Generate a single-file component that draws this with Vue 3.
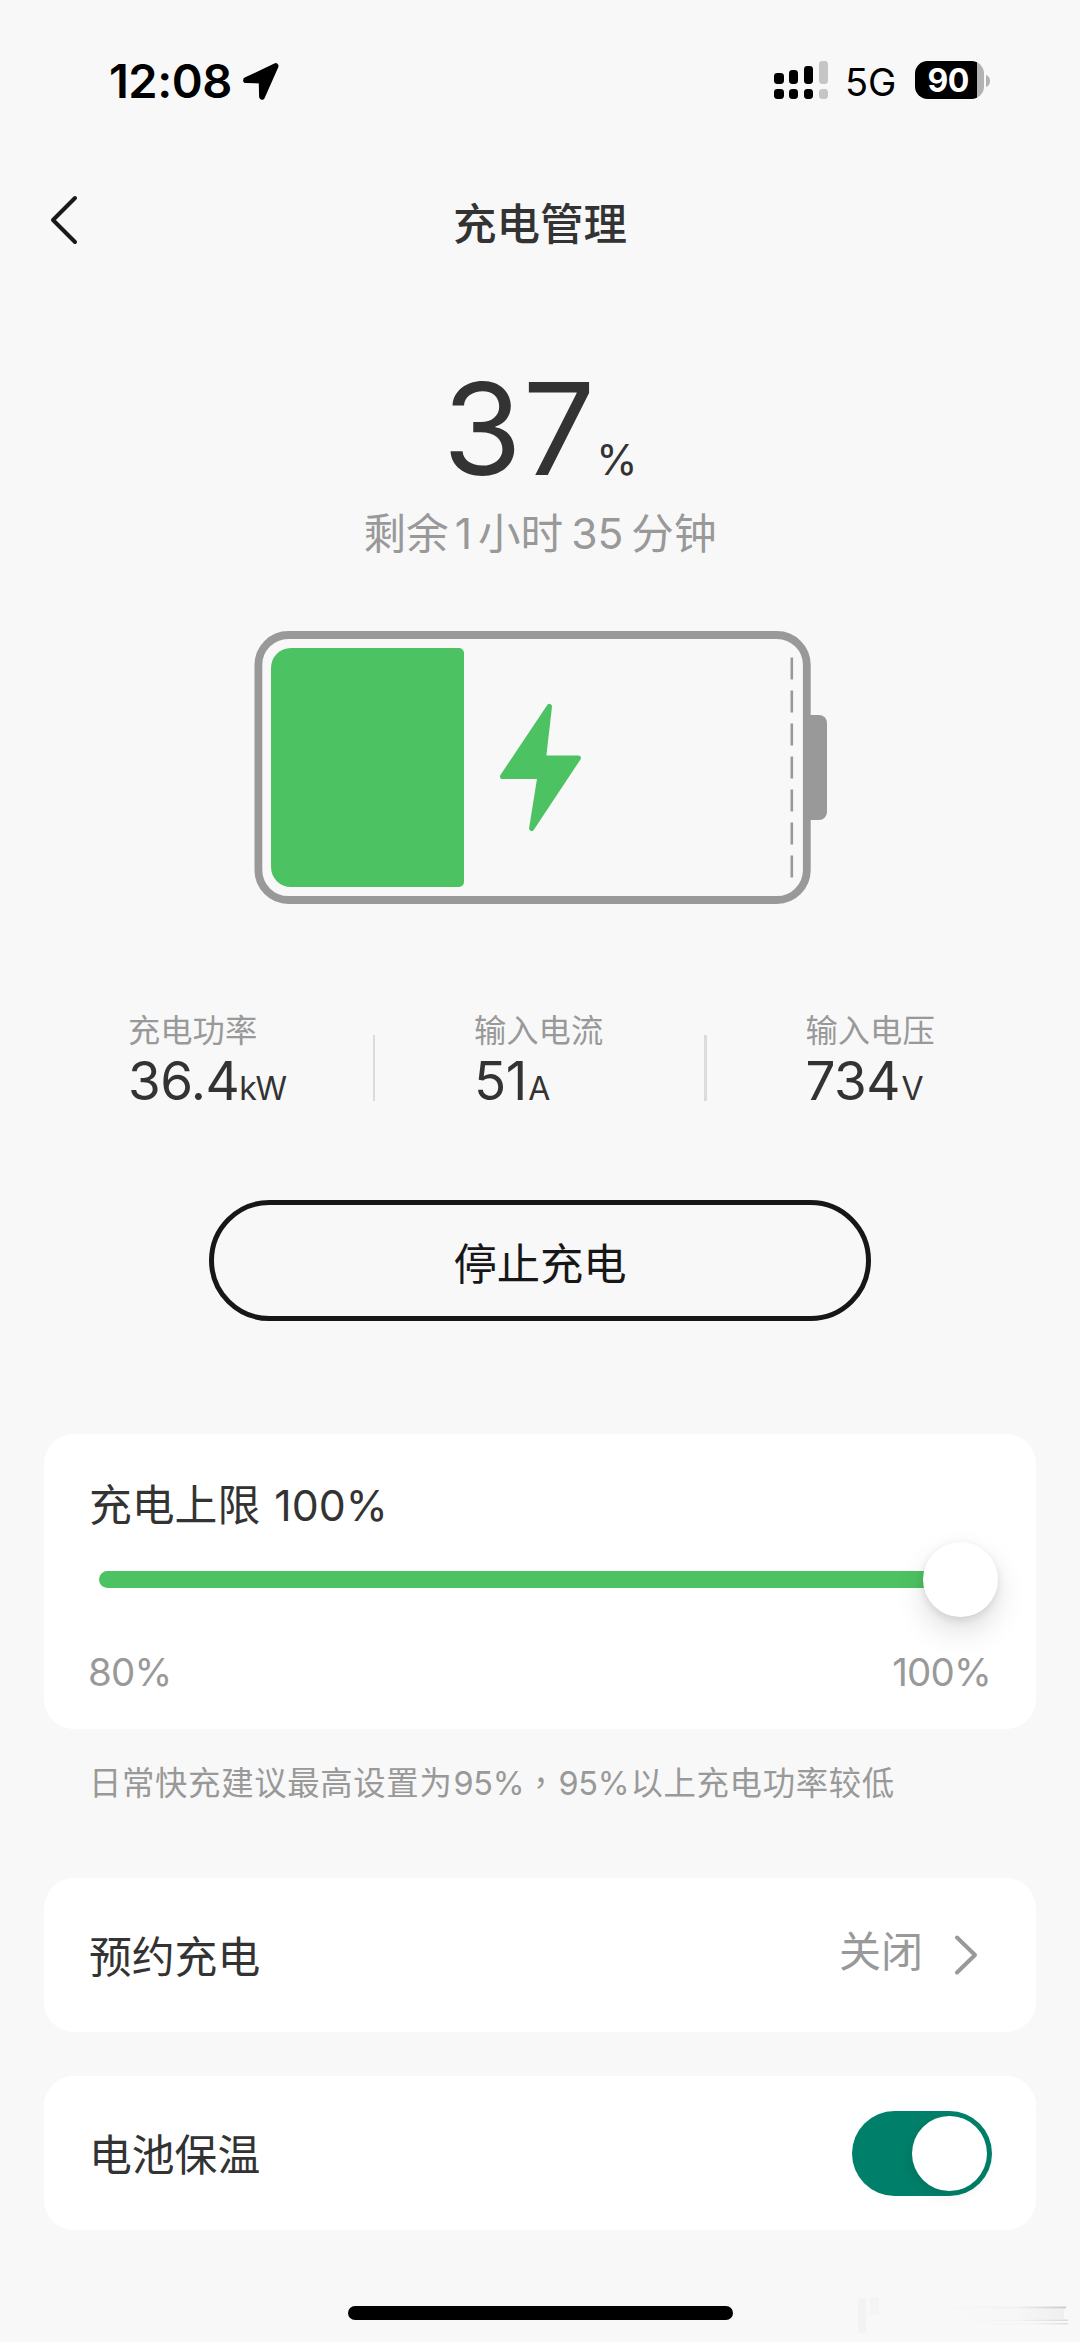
<script setup>
import { ref } from 'vue'

const level = ref(37)
const limit = ref(100)
const keepWarm = ref(true)

const stats = [
  { label: '充电功率', value: '36.4', unit: 'kW' },
  { label: '输入电流', value: '51', unit: 'A' },
  { label: '输入电压', value: '734', unit: 'V' },
]

const signal = [11, 14, 18, 23]
</script>

<template>
  <div class="screen">
    <header class="status">
      <div class="status-left">
        <span class="time">12:08</span>
        <svg class="locate" width="36" height="37" viewBox="0 0 36 37">
          <path d="M3 17.2 32.6 3 19 33.8 18.6 17.5Z" fill="#000" stroke="#000" stroke-width="5.8" stroke-linejoin="round" />
        </svg>
      </div>
      <div class="status-right">
        <div class="signal">
          <div v-for="(h, i) in signal" :key="i" class="signal-col" :class="{ off: i === 3 }">
            <i class="bar" :style="{ height: h + 'px' }"></i>
            <i class="dot"></i>
          </div>
        </div>
        <span class="network">5G</span>
        <div class="phone-battery"><span>90</span></div>
        <svg class="phone-nub" width="4" height="12" viewBox="0 0 4 12"><path d="M0 0C2.6 1 4 3.2 4 6S2.6 11 0 12Z" fill="#b2b2b2" /></svg>
      </div>
    </header>

    <nav class="nav">
      <svg class="back" width="30" height="52" viewBox="0 0 30 52">
        <path d="M26 4 4 26 26 48" fill="none" stroke="#191919" stroke-width="4" stroke-linecap="round" stroke-linejoin="round" />
      </svg>
      <h1>充电管理</h1>
    </nav>

    <section class="summary">
      <div class="percent"><span class="num">{{ level }}</span><span class="sign">%</span></div>
      <div class="remain"><span>剩余</span><b class="one">1</b><span>小时</span><b class="min">35</b><span>分钟</span></div>
    </section>

    <svg class="battery" width="574" height="274" viewBox="254 630 574 274">
      <rect x="258.4" y="635" width="548.4" height="265" rx="30" fill="none" stroke="#999" stroke-width="7.8" />
      <path d="M810 715h9a8 8 0 0 1 8 8v89a8 8 0 0 1-8 8h-9z" fill="#999" />
      <path d="M291 648H459a5 5 0 0 1 5 5V882a5 5 0 0 1-5 5H291a20 20 0 0 1-20-20V668a20 20 0 0 1 20-20z" fill="#4dc262" />
      <path d="M549.4 706.4 543.5 758H578.3L531.7 828.4 540 776.4H502.6Z" fill="#4dc262" stroke="#4dc262" stroke-width="5.2" stroke-linejoin="round" />
      <path d="M791.8 657.4V878" stroke="#999" stroke-width="2.6" stroke-dasharray="22 11" fill="none" />
    </svg>

    <section class="stats">
      <div v-for="s in stats" :key="s.label" class="stat">
        <span class="label">{{ s.label }}</span>
        <div class="value"><span>{{ s.value }}</span><small :class="{ wide: s.unit.length > 1 }">{{ s.unit }}</small></div>
      </div>
    </section>

    <button class="stop"><span>停止充电</span></button>

    <section class="card limit">
      <h2>充电上限 <span>{{ limit }}%</span></h2>
      <div class="slider">
        <div class="track"></div>
        <div class="thumb"></div>
      </div>
      <div class="range"><span>80%</span><span>100%</span></div>
    </section>
    <p class="hint">日常快充建议最高设置为<b>95%</b><i>，</i><b>95%</b>以上充电功率较低</p>

    <section class="card row schedule">
      <h2>预约充电</h2>
      <span class="state">关闭</span>
      <svg width="26" height="44" viewBox="0 0 26 44">
        <path d="M4 4.5 22 22 4 39.5" fill="none" stroke="#999" stroke-width="4" stroke-linecap="round" stroke-linejoin="round" />
      </svg>
    </section>

    <section class="card row warm">
      <h2>电池保温</h2>
      <div class="toggle" :class="{ on: keepWarm }"><i></i></div>
    </section>

    <div class="home"></div>
    <svg class="smudge" width="240" height="62" viewBox="0 0 240 62">
      <defs>
        <linearGradient id="fade" x1="0" x2="1" y1="0" y2="0">
          <stop offset="0" stop-color="#000" stop-opacity="0" />
          <stop offset=".6" stop-color="#000" stop-opacity=".03" />
          <stop offset="1" stop-color="#000" stop-opacity=".18" />
        </linearGradient>
      </defs>
      <rect x="18" y="18" width="8" height="35" fill="#000" opacity=".018" />
      <rect x="30" y="17" width="9" height="18" fill="#000" opacity=".014" />
      <rect x="100" y="26.5" width="126" height="2" fill="url(#fade)" />
      <rect x="100" y="29" width="124" height="10" fill="url(#fade)" opacity=".2" />
      <rect x="100" y="39.5" width="128" height="1.5" fill="url(#fade)" opacity=".7" />
      <rect x="140" y="43" width="88" height="1.5" fill="url(#fade)" opacity=".6" />
    </svg>
  </div>
</template>

<style>
body { background: #f8f8f8; }
</style>

<style scoped>
* { box-sizing: border-box; }
.screen {
  position: relative;
  width: 1080px;
  height: 2342px;
  overflow: hidden;
  display: flex;
  flex-direction: column;
  background: #f8f8f8;
  color: #333;
  font-family: Inter, "Noto Sans CJK SC", sans-serif;
  text-autospace: no-autospace;
}
h1, h2, p { margin: 0; font-weight: 400; }
b, i { font-weight: inherit; font-style: normal; }

.status {
  height: 162px;
  flex: none;
  display: flex;
  justify-content: space-between;
  padding: 0 90px 0 109px;
  color: #000;
}
.status-left, .status-right { display: flex; height: 162px; align-items: center; }
.time { font-size: 47px; font-weight: 600; line-height: 60px; letter-spacing: -0.5px; }
.locate { margin-left: 11px; overflow: visible; }
.status-right { align-items: flex-start; padding-top: 61px; }
.signal { display: flex; gap: 5.6px; height: 38px; align-items: flex-end; }
.signal-col { display: flex; flex-direction: column; gap: 5px; width: 9.2px; }
.signal-col i { display: block; border-radius: 3.4px; background: #000; }
.signal-col .dot { height: 10px; }
.signal-col.off i { background: #c5c5c5; }
.network { margin-left: 17px; font-size: 38px; line-height: 42px; width: 51px; }
.phone-battery {
  margin-left: 19px;
  width: 69px;
  height: 38px;
  border-radius: 12.5px;
  background: linear-gradient(90deg, #000 62px, #b2b2b2 62px);
  color: #fff;
  font-size: 32px;
  font-weight: 700;
  line-height: 39px;
  padding-left: 12.5px;
  letter-spacing: -0.5px;
}
.phone-nub { margin: 14px 0 0 2px; }

.nav {
  height: 120px;
  flex: none;
  display: flex;
  align-items: center;
  padding: 0 49px;
}
.nav h1 {
  flex: 1;
  margin-right: 30px;
  padding-top: 4px;
  text-align: center;
  font-size: 43.5px;
  font-weight: 500;
  line-height: 60px;
}
.back { flex: none; margin-bottom: 4px; }

.summary { height: 348px; flex: none; padding-top: 77px; }
.percent { display: flex; justify-content: center; align-items: baseline; height: 140px; line-height: 140px; }
.num { font-size: 128px; letter-spacing: 1px; }
.sign { font-size: 42px; margin-left: 0; }
.remain {
  display: flex;
  justify-content: center;
  align-items: baseline;
  height: 60px;
  line-height: 60px;
  margin-top: 5px;
  font-size: 42.6px;
  color: #999;
}
.one { margin: 0 6px; }
.min { margin: 0 8px; }

.battery { flex: none; display: block; margin-left: 254px; }

.stats { display: flex; height: 120px; flex: none; margin: 98px 0 0 42px; }
.stat { position: relative; width: 331.5px; padding-left: 100.5px; }
.stat:first-child { padding-left: 86px; }
.stat + .stat::before {
  content: "";
  position: absolute;
  left: -1px;
  top: 33px;
  width: 2.5px;
  height: 66px;
  background: #dcdcdc;
}
.label { display: block; font-size: 32.3px; line-height: 40px; margin-top: 9px; color: #999; }
.value { font-size: 53px; line-height: 60px; display: flex; align-items: baseline; letter-spacing: -0.5px; }
.value small { font-size: 32px; letter-spacing: -1px; margin-left: 1.5px; }
.value small.wide { letter-spacing: -1.5px; margin-left: 0; }

.stop {
  flex: none;
  width: 662px;
  height: 121px;
  margin: 78px auto 0;
  border: 5px solid #171717;
  border-radius: 61px;
  background: none;
  color: #171717;
  font: 400 43.3px/112px Inter, "Noto Sans CJK SC", sans-serif;
  padding: 5px 0 0;
}
.stop span { display: block; line-height: 108px; }

.card { flex: none; margin: 0 44px; background: #fff; border-radius: 30px; }
.card h2 { font-size: 42.8px; line-height: 60px; white-space: pre; }
.limit { height: 295px; margin-top: 113px; padding: 42px 45px 0; }
.limit h2 span { margin-left: 2px; }
.slider { position: relative; height: 75px; margin: 6px 0 0 10px; display: flex; align-items: center; }
.track { width: 850px; height: 17px; border-radius: 9px; background: #4dc262; }
.thumb {
  position: absolute;
  left: 824px;
  top: 0;
  width: 75px;
  height: 75px;
  border-radius: 50%;
  background: #fff;
  box-shadow: 0 14px 30px rgba(0, 0, 0, .13), 0 3px 9px rgba(0, 0, 0, .1);
}
.range { display: flex; justify-content: space-between; margin: 31px 0 0 -1px; font-size: 38.5px; line-height: 48px; letter-spacing: -0.8px; color: #999; }
.hint { flex: none; height: 149px; padding: 27px 0 0 89px; font-size: 32.4px; line-height: 50px; letter-spacing: .65px; color: #999; white-space: nowrap; }
.hint b { margin: 0 0 0 1px; letter-spacing: -0.2px; }
.hint i + b { margin-right: 1px; }
.hint i { font-family: "Noto Sans CJK TC", sans-serif; }

.row { height: 154px; display: flex; align-items: center; padding: 0 45px; }
.row h2 { flex: 1; padding-top: 6px; }
.state { font-size: 42px; line-height: 60px; color: #999; margin-bottom: 7px; }
.schedule svg { margin: 0 12px 0 30px; }
.warm { margin-top: 44px; padding-right: 44px; }
.toggle { width: 140px; height: 85px; border-radius: 43px; background: #ccc; padding: 5px; display: flex; }
.toggle.on { background: #00806a; justify-content: flex-end; }
.toggle i { width: 75px; height: 75px; border-radius: 50%; background: #fff; box-shadow: -2px 4px 14px rgba(0, 0, 0, .1); }

.home { flex: none; width: 385px; height: 14px; border-radius: 7px; background: #000; margin: 76px auto 0; }
.smudge { position: absolute; right: 0; bottom: 0; }
</style>
